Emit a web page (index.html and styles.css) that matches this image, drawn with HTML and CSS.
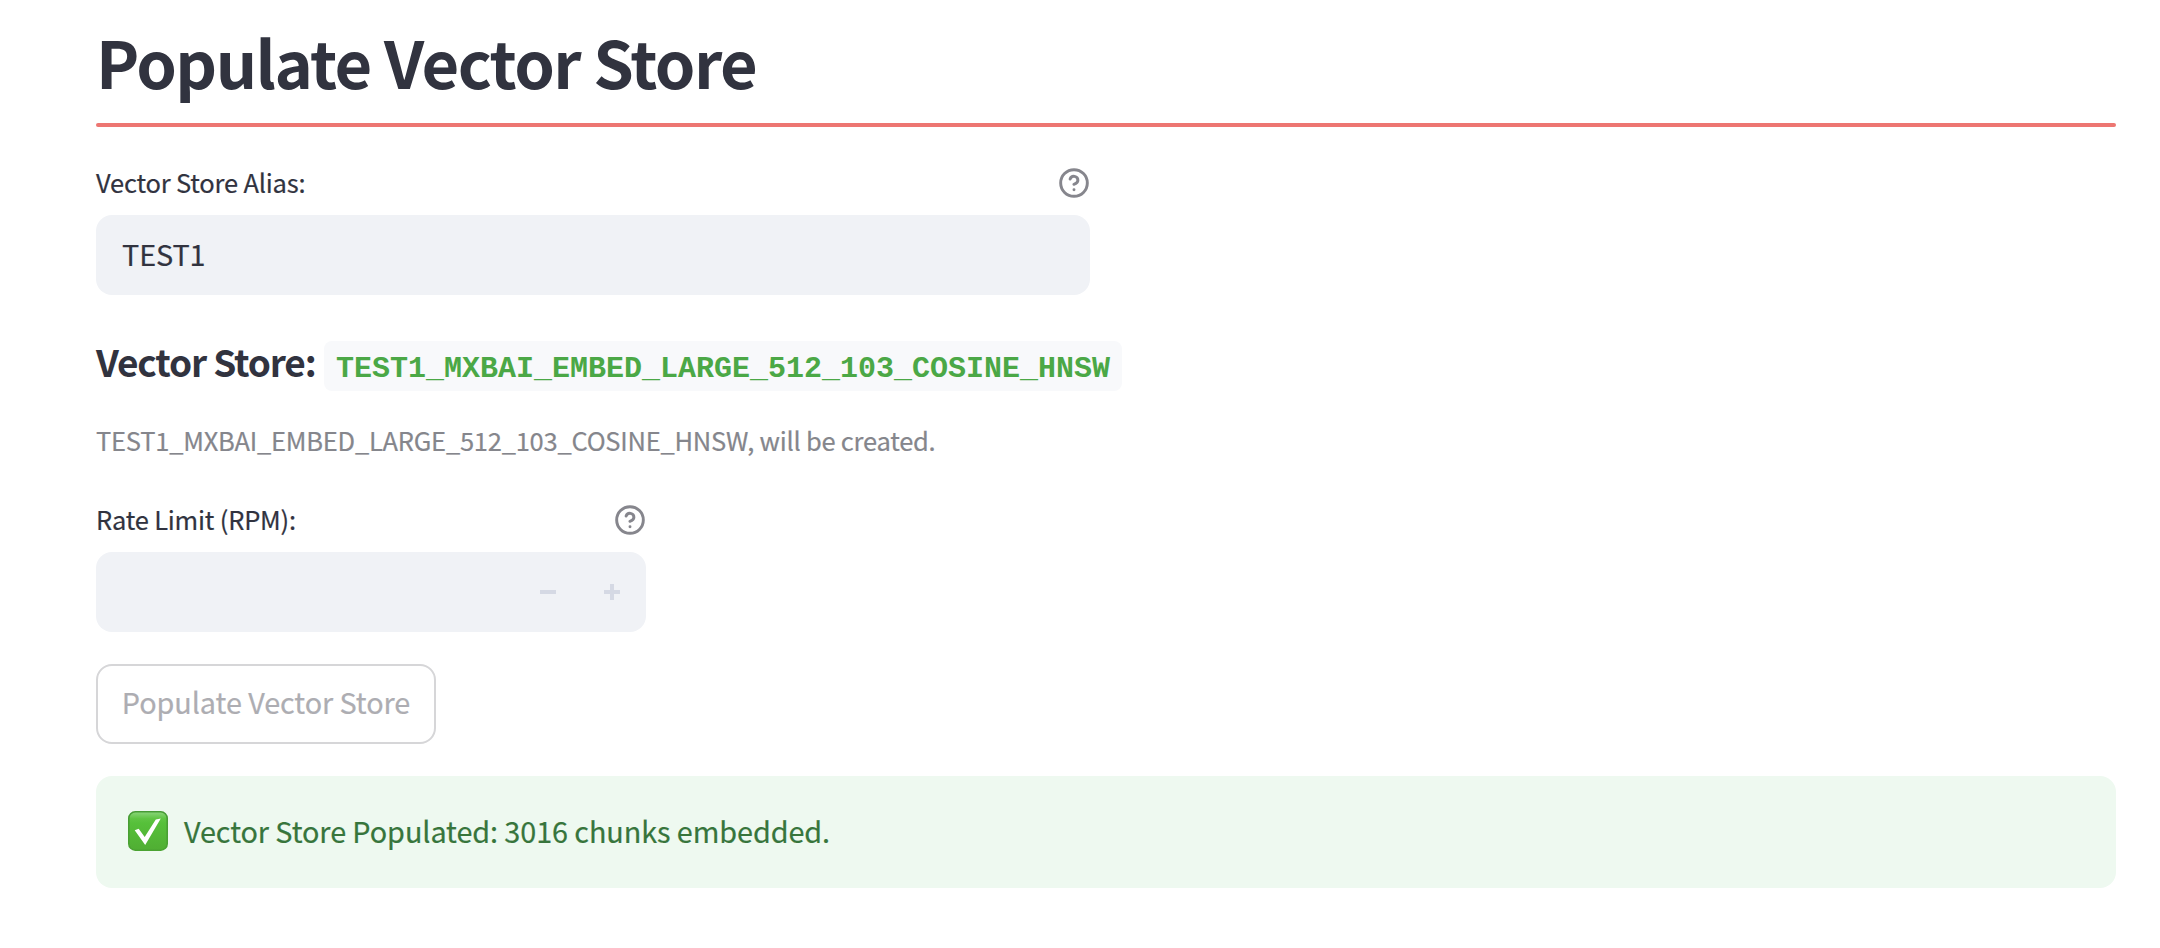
FILE: index.html
```html
<!DOCTYPE html>
<html lang="en">
<head>
<meta charset="utf-8">
<title>Populate Vector Store</title>
<link rel="stylesheet" href="styles.css">
</head>
<body>
<main class="page">
  <h1 class="title">Populate Vector Store</h1>
  <hr class="divider">
  <section class="field field-alias">
    <div class="label-row">
      <label class="label label-alias" for="alias">Vector Store Alias:</label>
      <svg class="help" viewBox="0 0 24 24"><circle cx="12" cy="12" r="10"/><path d="M9.09 9a3 3 0 0 1 5.83 1c0 2-3 3-3 3M12 17h.01"/></svg>
    </div>
    <input class="input" id="alias" type="text" value="TEST1">
  </section>
  <h3 class="store"><span class="store-label">Vector Store:</span><code class="store-name">TEST1_MXBAI_EMBED_LARGE_512_103_COSINE_HNSW</code></h3>
  <p class="caption"><span>TEST1_MXBAI_EMBED_LARGE_512_103_COSINE_HNSW, will be created.</span></p>
  <section class="field field-rate">
    <div class="label-row">
      <span class="label label-rate">Rate Limit (RPM):</span>
      <svg class="help" viewBox="0 0 24 24"><circle cx="12" cy="12" r="10"/><path d="M9.09 9a3 3 0 0 1 5.83 1c0 2-3 3-3 3M12 17h.01"/></svg>
    </div>
    <div class="stepper">
      <svg class="step" viewBox="0 0 16 16"><path d="M0 6h16v4H0z"/></svg>
      <svg class="step" viewBox="0 0 16 16"><path d="M0 6h6V0h4v6h6v4h-6v6H6v-6H0z"/></svg>
    </div>
  </section>
  <button class="button" disabled><span>Populate Vector Store</span></button>
  <div class="alert">
    <svg class="check" viewBox="0 0 40 40">
      <defs>
        <linearGradient id="tile" x1="0" y1="0" x2="0" y2="1"><stop offset="0" stop-color="#8bd57b"/><stop offset=".18" stop-color="#5fc443"/><stop offset=".3" stop-color="#56c03a"/><stop offset="1" stop-color="#50ae33"/></linearGradient>
        <linearGradient id="rim" x1="0" y1="0" x2="0" y2="1"><stop offset="0" stop-color="#479b35"/><stop offset="1" stop-color="#4aa332"/></linearGradient>
      </defs>
      <rect x=".8" y=".8" width="38.4" height="38.4" rx="6.5" fill="url(#tile)" stroke="url(#rim)" stroke-width="1.6"/>
      <path d="M6.7 19.3l4-1.5 6 8.2L27.8 8.5l5-1L17.2 34z" fill="#fff"/>
    </svg>
    <span class="alert-text">Vector Store Populated: 3016 chunks embedded.</span>
  </div>
</main>
</body>
</html>
```
FILE: styles.css
```css
* { box-sizing: border-box; }
body {
  margin: 0;
  background: #fff;
  color: #31333f;
  font-family: "Noto Sans CJK SC", "Open Sans", sans-serif;
}
.page {
  display: flex;
  flex-direction: column;
  align-items: flex-start;
  padding: 21px 44px 60px 96px;
}
.title { margin: 0; font-size: 65px; line-height: 80px; font-weight: 700; letter-spacing: -1.55px; white-space: nowrap; }
.divider { width: 100%; height: 4px; margin: 22px 0 34px; border: 0; border-radius: 2px; background: #ed7672; }
.field { display: flex; flex-direction: column; gap: 12px; }
.field-alias { width: 994px; }
.field-rate { width: 550px; margin-top: 37px; }
.label-row { display: flex; justify-content: space-between; align-items: center; height: 42px; }
.label { font-size: 25.5px; line-height: 42px; letter-spacing: -.2px; -webkit-text-stroke: .2px; }
.help { width: 32px; height: 32px; margin-top: 2px; fill: none; stroke: #86868d; stroke-width: 2.2; stroke-linecap: round; stroke-linejoin: round; }
.input {
  width: 100%;
  height: 80px;
  padding: 0 26px 3px;
  border: 0;
  border-radius: 16px;
  background: #f0f2f6;
  color: inherit;
  font: 28.8px "Noto Sans CJK SC", sans-serif;
  letter-spacing: -.1px;
  -webkit-text-stroke: .2px;
}
.store { display: flex; margin: 46px 0 0; height: 50px; white-space: nowrap; }
.store-label { width: 228px; font-size: 37px; line-height: 40px; letter-spacing: -1.15px; }
.store-name {
  height: 50px;
  width: 798px;
  padding: 0 12px;
  border-radius: 8px;
  background: #f8f9fb;
  color: #4ba846;
  font: 700 30px/56px "Liberation Mono", monospace;
}
.caption { margin: 28px 0 0; color: #85868c; font-size: 25.5px; line-height: 42px; letter-spacing: -.24px; white-space: nowrap; -webkit-text-stroke: .2px; }
.stepper {
  display: flex;
  justify-content: flex-end;
  align-items: center;
  gap: 48px;
  height: 80px;
  padding-right: 26px;
  border-radius: 16px;
  background: #f0f2f6;
}
.step { width: 16px; height: 16px; fill: #d5d9e4; }
.button {
  width: 340px;
  height: 80px;
  margin-top: 32px;
  padding: 0 0 5px;
  border: 2px solid #d6d6d8;
  border-radius: 16px;
  background: #fff;
  color: #adadb2;
  font: 28.8px "Noto Sans CJK SC", sans-serif;
  letter-spacing: -.08px;
  white-space: nowrap;
  -webkit-text-stroke: .2px;
}
.alert {
  display: flex;
  align-items: center;
  gap: 16px;
  width: 100%;
  height: 112px;
  margin-top: 32px;
  padding: 0 32px 2px;
  border-radius: 16px;
  background: #eef9f0;
  color: #37753c;
  font-size: 28.8px;
}
.check { width: 40px; height: 40px; }
.alert-text { padding-bottom: 2px; letter-spacing: -.08px; white-space: nowrap; -webkit-text-stroke: .2px; }
```
